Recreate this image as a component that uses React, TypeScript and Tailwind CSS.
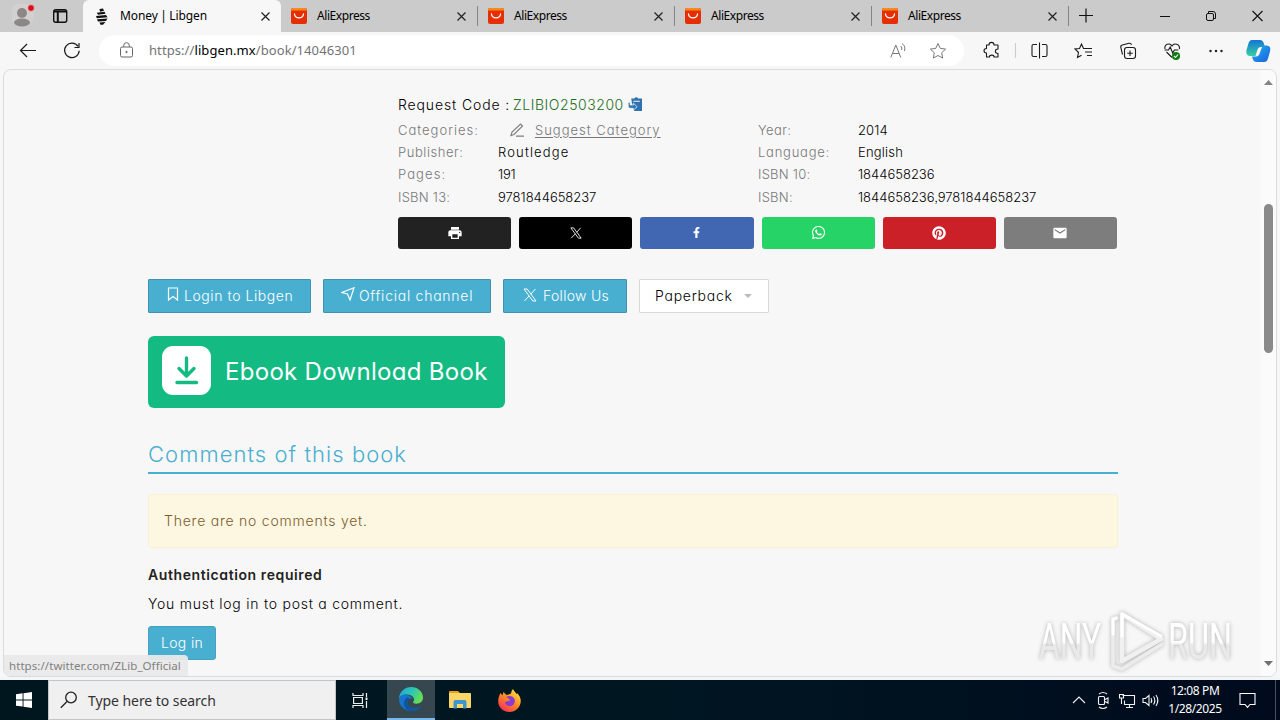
import type { ReactNode } from 'react';
import { FaWhatsapp, FaPinterest, FaFacebookF } from 'react-icons/fa';
import { MdPrint, MdEmail } from 'react-icons/md';

const UI = "font-['Noto_Sans',sans-serif]";

const tabs = ['t1', 't2', 't3', 't4'];

const leftFacts = [
  { label: 'Publisher:', value: 'Routledge', lt: 'tracking-[0.55px]', vt: 'tracking-[1.15px]' },
  { label: 'Pages:', value: '191', lt: 'tracking-[1.1px]', vt: 'tracking-[-0.2px]' },
  { label: 'ISBN 13:', value: '9781844658237', lt: 'tracking-[0.25px]', vt: 'tracking-[-0.02px]' },
];

const rightFacts = [
  { label: 'Year:', value: '2014', lt: 'tracking-[0.4px]', vt: 'tracking-[0.1px]' },
  { label: 'Language:', value: 'English', lt: 'tracking-[0.75px]', vt: 'tracking-[0.2px]' },
  { label: 'ISBN 10:', value: '1844658236', lt: 'tracking-[0.25px]', vt: 'tracking-[0px]' },
  { label: 'ISBN:', value: '1844658236,9781844658237', lt: 'tracking-[0.25px]', vt: 'tracking-[0px]' },
];

function XLogo({ className }: { className?: string }) {
  return (
    <svg viewBox="0 0 14 14" className={className} fill="none" stroke="currentColor">
      <path d="M1 1h3.2L13 13H9.8zM12.4 1 7.8 6.2M6.2 7.9 1.4 13" strokeWidth="1" />
    </svg>
  );
}

function CloseIcon() {
  return (
    <svg width="9" height="9" viewBox="0 0 9 9" fill="none" stroke="#222" strokeWidth="1.2">
      <path d="M.5.5l8 8M8.5.5l-8 8" />
    </svg>
  );
}

function AliIcon() {
  return (
    <svg width="16" height="16" viewBox="0 0 16 16" className="shrink-0">
      <rect width="16" height="16" rx="2" fill="#e62e04" />
      <path d="M0 2.500V2a2 2 0 0 1 2-2h12a2 2 0 0 1 2 2v.5z" fill="#f58b1c" />
      <path d="M3.5 6c.6 5.2 8.4 5.2 9 0" fill="none" stroke="#fff" strokeWidth="1.3" strokeLinecap="round" />
    </svg>
  );
}

function TabStrip() {
  return (
    <div className="flex h-8 bg-[#cbcbcb]">
      <div className="flex w-[83px] shrink-0 items-center pl-3">
        <svg width="58" height="24" viewBox="0 0 58 24" fill="none">
          <circle cx="10" cy="11" r="12" fill="#d3d1d0" />
          <circle cx="10" cy="9" r="5" fill="#8c8886" />
          <ellipse cx="10" cy="18.5" rx="8" ry="4" fill="#8c8886" />
          <circle cx="19" cy="4" r="3.4" fill="#e00b1c" stroke="#e8d5d5" strokeWidth=".8" />
          <rect x="41.7" y="5.7" width="13" height="12.6" rx="2" stroke="#111" strokeWidth="1.4" />
          <path d="M42 7.5h12.5M45.8 8v10" stroke="#111" strokeWidth="2" />
        </svg>
      </div>
      <div className="flex w-[198px] shrink-0 items-center rounded-t-md bg-[#f7f7f7] pl-[13px] pr-[11px]">
        <svg width="12" height="17" viewBox="0 0 12 17" fill="#111">
          <path d="M3.500 1 7 .5l1 2.300-4 1zM.8 4.800 8.500 3.800 9.500 5.800 2 6.800zM0 8 10 7l1.500 2.300L.8 10.300zM1 11.300 11.500 10.500 10 13l-8 .6zM3.500 14.400l6-.4L7 16.800H4.500z" />
        </svg>
        <span className="ml-[12px] flex-1 text-[12px] tracking-[-0.4px] text-black [word-spacing:-0.5px]">
          <span className="tracking-[-0.1px]">Money | Libgen</span>
        </span>
        <CloseIcon />
      </div>
      {tabs.map((id) => (
        <div key={id} className="flex w-[197px] shrink-0 items-center">
          <div className="flex flex-1 items-center pl-[10px] pr-[11px]">
            <AliIcon />
            <span className="ml-[10px] flex-1 text-[12px] tracking-[-0.43px] text-black">AliExpress</span>
            <CloseIcon />
          </div>
          <div className="h-5 w-px bg-[#858585]" />
        </div>
      ))}
      <svg width="211" height="32" viewBox="0 0 211 32" fill="none" stroke="#111" className="-ml-px shrink-0">
        <path d="M11 15.5h14M18 8.5v14" strokeWidth="1.2" />
        <path d="M92 16.5h10" />
        <rect x="138.5" y="13.5" width="7" height="7" rx="1.5" />
        <path d="M140.5 13v-1.500h4.500a2.500 2.500 0 0 1 2.500 2.500V18.500h-1.500" />
        <path d="M184.500 11l10 10M194.500 11l-10 10" strokeWidth="1.100" />
      </svg>
    </div>
  );
}

function Toolbar() {
  return (
    <div className="flex h-[37px] items-center bg-[#f7f7f7]">
      <svg width="99" height="37" viewBox="0 0 99 37" fill="none" stroke="#1b1b1b" strokeWidth="1.2" className="shrink-0">
        <path d="M36 18.500H20.500M27 12l-6.500 6.500L27 25" />
        <path d="M78 14.300a7.300 7.300 0 1 0 1.200 4.500M79 11v4.500h-4.500" />
      </svg>
      <div className="flex h-[31px] w-[865px] shrink-0 items-center rounded-full bg-white pl-[21px] pr-[16px]">
        <svg width="13" height="16" viewBox="0 0 13 16" fill="none" stroke="#666" className="-mt-px">
          <rect x=".5" y="5" width="12" height="10" rx="1.5" />
          <path d="M3.700 5V3.500a2.800 2.800 0 0 1 5.600 0V5" />
          <circle cx="6.500" cy="10" r=".7" fill="#666" />
        </svg>
        <span className="ml-[16px] flex-1 text-[13px] tracking-[0.08px] text-[#737373]">
          https://<span className="text-black">libgen.mx</span>/book/14046301
        </span>
        <svg width="58" height="18" viewBox="0 0 58 18" fill="none" stroke="#777">
          <path d="M.8 15.500 5.800 3l5 12.500M2.500 11.500h6.600M10.500 4c1.500 1 1.500 3 1 4M12 1.500c3 2 3.300 5 2.300 7.500" />
          <path d="M48 1.500l2.300 4.900 5.300.7-3.900 3.700 1 5.300-4.700-2.600-4.700 2.600 1-5.300-3.900-3.700 5.300-.7z" strokeLinejoin="round" />
        </svg>
      </div>
      <svg width="316" height="37" viewBox="964 0 316 37" fill="none" stroke="#1b1b1b" strokeWidth="1.1" className="shrink-0">
        <path d="M986.500 13h2.500c0-3.500 5-3.500 5 0h4v4c-3.500 0-3.500 4.500 0 4.500V25h-4c0-2.500-4.500-2.500-4.500 0h-3v-4c-3.300 0-3.300-4.500 0-4.500z" strokeLinejoin="round" />
        <path d="M1015.500 11v15" stroke="#ccc" />
        <path d="M1037 12.500h-3.500q-1.500 0-1.500 1.500v9q0 1.500 1.500 1.500h3.500M1042 12.500h3.500q1.500 0 1.500 1.500v9q0 1.500-1.500 1.500h-3.500M1039.500 10.500v16" />
        <path d="M1085 16.500h-1.500L1081.500 12l-2 4.500-4.500.5 3.500 3.500-1 5 4-2.300M1085 16.500h7M1085 20h7M1087 23.500h5" />
        <rect x="1124.500" y="15.500" width="11" height="11" rx="2.500" />
        <path d="M1130 18.500v5.500M1127.300 21.200h5.500M1122.500 22.500l-1.700-7q-.4-2 1.500-2.500l6.700-1.700q2-.4 2.500 1.500" />
        <path d="M1172 25.500l-5.500-5.500M1165 17c-1-5 5-6.500 7-3 2-3.500 8-2 7.500 3M1164.500 18h4l1.700-3 2.500 6 1.700-3h4" />
        <circle cx="1176" cy="24" r="4" fill="#107c10" stroke="none" />
        <path d="M1174 24l1.500 1.500 2.500-3" stroke="#fff" />
        <g fill="#1b1b1b" stroke="none">
          <circle cx="1210.500" cy="19" r="1.200" />
          <circle cx="1216" cy="19" r="1.200" />
          <circle cx="1221.500" cy="19" r="1.200" />
        </g>
        <defs>
          <linearGradient id="cpA" x1="0" y1="0" x2="0" y2="1">
            <stop offset="0" stopColor="#1474d8" />
            <stop offset="1" stopColor="#35d0a0" />
          </linearGradient>
          <linearGradient id="cpB" x1="0" y1="0" x2="1" y2="1">
            <stop offset="0" stopColor="#22b4ee" />
            <stop offset="1" stopColor="#1a5fe0" />
          </linearGradient>
        </defs>
        <g stroke="none">
          <path d="M1252 8h8q3 0 4 4l1 3h-4q-3 0-4 4l-1.500 5h-5q-5 0-4-6l1.800-6q1-4 3.700-4z" fill="url(#cpA)" />
          <path d="M1264.500 13.500h2q5 0 3.500 6l-2 7q-1 3.500-4 3.500h-7.500q-3.500 0-4.500-5.500h4q3 0 4-4l1.500-4q.8-3 3-3z" fill="url(#cpB)" />
        </g>
      </svg>
    </div>
  );
}

function ShareButton({ color, children }: { color: string; children: ReactNode }) {
  return <div className={`flex h-8 flex-1 items-center justify-center rounded-[3px] text-white ${color}`}>{children}</div>;
}

function Fact({ label, value, lt, vt }: { label: string; value: string; lt: string; vt: string }) {
  return (
    <div className="flex h-[22.4px] items-center">
      <span className={`w-[100px] text-[#777] ${lt}`}>{label}</span>
      <span className={`text-black ${vt}`}>{value}</span>
    </div>
  );
}

function BookDetails() {
  return (
    <div className="ml-[250px] pt-[23px]">
      <div className="mb-[4px] flex h-[22px] items-center text-[14px] text-black">
        <span className="tracking-[0.87px]">Request Code :</span>
        <span className="ml-[3px] tracking-[0.55px] text-[#1c6e1c]">ZLIBIO2503200</span>
        <svg width="14" height="14" viewBox="0 0 13 13" className="ml-[4px]">
          <path d="M3 1.500h3a1.700 1.700 0 0 1 3.300 0H13V13H6L4.500 11z" fill="#2f72b0" />
          <path d="M5 3.500h6v1H5z" fill="#f7f7f7" />
          <path d="M0 5.500 2 4.500v3h3V5.800L8.500 9 5 12.200v-1.700H1.500Q0 10 0 5.500z" fill="#2f72b0" stroke="#f7f7f7" strokeWidth=".7" />
        </svg>
      </div>
      <div className="grid grid-cols-2 text-[13px] leading-none">
        <div>
          <div className="flex h-[22.4px] items-center text-[#777]">
            <span className="w-[112px] tracking-[1px]">Categories:</span>
            <svg width="14" height="14" viewBox="0 0 14 14" fill="none" stroke="#808080" strokeWidth="1.200">
              <path d="M1 12.500l1-3.500 8.500-8 2 2L4 11.500zM6 13.200h8" />
            </svg>
            <span className="ml-[11px] tracking-[1px] underline underline-offset-2">Suggest Category</span>
          </div>
          {leftFacts.map((f) => (
            <Fact key={f.label} {...f} />
          ))}
        </div>
        <div>
          {rightFacts.map((f) => (
            <Fact key={f.label} {...f} />
          ))}
        </div>
      </div>
      <div className="mt-[8px] flex gap-2 pr-px">
        <ShareButton color="bg-[#222]"><MdPrint size={16} /></ShareButton>
        <ShareButton color="bg-black"><XLogo className="h-3 w-3" /></ShareButton>
        <ShareButton color="bg-[#4267b2]"><FaFacebookF size={11} /></ShareButton>
        <ShareButton color="bg-[#25d366]"><FaWhatsapp size={15} /></ShareButton>
        <ShareButton color="bg-[#cb2027]"><FaPinterest size={14} /></ShareButton>
        <ShareButton color="bg-[#7d7d7d]"><MdEmail size={16} /></ShareButton>
      </div>
    </div>
  );
}

function Actions() {
  const blue = 'flex h-[34px] items-center rounded-[1px] border border-[#3f92b0] bg-[#49afd0] pb-px text-white';
  return (
    <div className="mt-[30px] flex gap-3 text-[14px]">
      <div className={`${blue} w-[163px] pl-[18px]`}>
        <svg width="12" height="14" viewBox="0 0 12 14" fill="none" stroke="currentColor" strokeWidth="1.200" className="-mt-[3px]">
          <path d="M1.500 1h9v12L6 9.500 1.500 13z" />
        </svg>
        <span className="ml-[5px] tracking-[0.57px]">Login to Libgen</span>
      </div>
      <div className={`${blue} w-[168px] pl-[17px]`}>
        <svg width="14" height="14" viewBox="0 0 14 14" fill="none" stroke="currentColor" strokeWidth="1.200" className="-mt-[3px]">
          <path d="M.8 5.500 13 .8 9 13 6.500 7z" />
        </svg>
        <span className="ml-[4px] tracking-[0.75px]">Official channel</span>
      </div>
      <div className={`${blue} w-[124px] pl-[19px]`}>
        <XLogo className="h-[14px] w-[14px]" />
        <span className="ml-[6px] tracking-[0.3px]">Follow Us</span>
      </div>
      <div className="flex h-[34px] w-[130px] items-center rounded-[1px] border border-[#d8d8d8] bg-white pb-px pl-[15px] text-black">
        <span className="tracking-[0.75px]">Paperback</span>
        <svg width="8" height="4" viewBox="0 0 8 4" className="ml-[11px] mt-px">
          <path d="M0 0h8L4 4z" fill="#bbb" />
        </svg>
      </div>
    </div>
  );
}

function Page() {
  return (
    <div className="ml-[144px] w-[970px] flex-none font-light">
      <BookDetails />
      <Actions />
      <div className="mt-[23px] flex h-[72px] w-[357px] items-center rounded-md bg-[#13ba82] pl-[14px]">
        <svg width="49" height="49" viewBox="0 0 49 49" className="-mt-[3px]">
          <rect width="49" height="49" rx="11" fill="#fff" />
          <path d="M24.500 12v17M17 22.500l7.500 7.500 7.500-7.500M15 36.500h19.500" fill="none" stroke="#13ba82" strokeWidth="3.400" strokeLinecap="round" strokeLinejoin="round" />
        </svg>
        <span className="ml-[14px] text-[24px] font-normal tracking-[0.3px] text-white">Ebook Download Book</span>
      </div>
      <div className="mt-[32px] h-[34px] border-b-2 border-[#49afd0] text-[22px] leading-[29px] tracking-[1.05px] text-[#49afd0]">
        Comments of this book
      </div>
      <div className="mt-[20px] flex h-[54px] items-center rounded-[3px] border border-[#faf0d3] bg-[#fdf7e2] pb-px pl-[15px] text-[14px] tracking-[0.77px] text-[#7a5c2a]">
        There are no comments yet.
      </div>
      <div className="mt-[17px] text-[14px] font-semibold leading-5 tracking-[0.6px] text-[#222]">Authentication required</div>
      <div className="mt-[9px] text-[14px] leading-5 tracking-[0.75px] text-black">You must log in to post a comment.</div>
      <div className="mt-[12px] flex h-[34px] w-[68px] items-center justify-center rounded-[3px] border border-[#45a3c2] bg-[#49afd0] pb-px text-[14px] tracking-[0.35px] text-white">
        Log in
      </div>
    </div>
  );
}

function Watermark() {
  return (
    <svg width="220" height="68" viewBox="0 0 220 68" className="absolute left-[1033px] top-[608px] drop-shadow-[0_0_2px_rgba(0,0,0,0.28)]">
      <defs>
        <linearGradient id="wm" x1="0" y1="0" x2="0" y2="1">
          <stop offset=".5" stopColor="#fff" />
          <stop offset=".55" stopColor="#e9e9e9" />
        </linearGradient>
      </defs>
      <g className="font-['Roboto',sans-serif]" fill="url(#wm)" fontSize="50">
        <text x="6" y="51" textLength="62" lengthAdjust="spacingAndGlyphs">ANY</text>
        <text x="135" y="51" textLength="64" lengthAdjust="spacingAndGlyphs">RUN</text>
      </g>
      <g fill="none" strokeLinejoin="round" strokeLinecap="round">
        <path d="M84 10l-4 2v46l9 3 40-25" stroke="#ececec" strokeWidth="3.500" />
        <path d="M89 6v47l39-22z" stroke="#f0f0f0" strokeWidth="4.500" />
        <path d="M89 28V6l39 22M80 26V11l3-1" stroke="#fff" strokeWidth="3" />
      </g>
    </svg>
  );
}

function Viewport() {
  return (
    <div className="relative ml-[3px] flex h-[608px] w-[1274px] overflow-hidden rounded-lg border border-[#dcdcdc] bg-[#f7f7f7] font-['Inter',sans-serif] [font-feature-settings:'cv11','ss03']">
      <Page />
      <div className="ml-auto flex w-[15px] flex-col items-center bg-[#fbfbfb]">
        <svg width="9" height="5" viewBox="0 0 9 5" className="mt-[10px]"><path d="M0 5h9L4.500 0z" fill="#858585" /></svg>
        <div className="mt-[119px] h-[149px] w-[9px] rounded-full bg-[#8a8a8a]" />
        <svg width="9" height="5" viewBox="0 0 9 5" className="mt-[308px]"><path d="M0 0h9L4.500 5z" fill="#707070" /></svg>
      </div>
      <div className={`absolute bottom-0 left-0 flex h-[21px] w-[184px] items-center rounded-tr bg-[#e9e9e9]/95 pl-[5px] text-[11.5px] tracking-[0.07px] text-[#808080] ${UI}`}>
        https://twitter.com/ZLib_Official
      </div>
    </div>
  );
}

function Taskbar() {
  return (
    <div className="flex h-10 bg-linear-to-r from-[#00161f] via-[#001722] to-[#000a1c]">
      <div className="flex w-12 items-center justify-center">
        <svg width="16" height="16" viewBox="0 0 16 16" fill="#fff">
          <path d="M0 2.300 6.600 1.300v6.200H0zM7.500 1.200 16 0v7.500H7.500zM0 8.400h6.600v6.200L0 13.700zM7.500 8.400H16V16l-8.500-1.200z" />
        </svg>
      </div>
      <div className="flex w-[288px] items-center border border-[#c4c4c4] bg-[#f0f0f0] pl-[11px]">
        <svg width="18" height="18" viewBox="0 0 18 18" fill="none" stroke="#222" strokeWidth="1.300">
          <circle cx="11" cy="6.500" r="5.300" />
          <path d="M7 10.500.8 16.800" />
        </svg>
        <span className="ml-[10px] text-[14px] tracking-[-0.06px] text-[#333]">Type here to search</span>
      </div>
      <div className="flex w-[49px] items-center justify-center">
        <svg width="17" height="17" viewBox="0 0 17 17" fill="none" stroke="#eee" strokeWidth="1.200">
          <path d="M1 1v2.500h10V1M1 16v-2.500h10V16M1.600 5.500h8.800v6H1.600zM14.500 1v4M14.500 9v7" />
          <rect x="13.500" y="5.500" width="2" height="2.500" fill="#eee" stroke="none" />
        </svg>
      </div>
      <div className="ml-[2px] flex w-12 items-center justify-center border-b-2 border-[#76b9ed] bg-[#36474f]">
        <svg width="24" height="24" viewBox="0 0 24 24">
          <defs>
            <linearGradient id="edA" x1="0" y1="0" x2="1" y2=".4">
              <stop offset="0" stopColor="#1fa5e0" />
              <stop offset=".6" stopColor="#30c8b0" />
              <stop offset="1" stopColor="#66dd55" />
            </linearGradient>
          </defs>
          <path d="M0 11.500C.5 4.500 6 0 12 0c7 0 12 5 12 10.500 0 4-3 6.200-6.500 6.200-2.500 0-4-1-3.300-2 1-1.200 1-2.200.6-3.400C13.500 7 4 5.500 0 11.500z" fill="url(#edA)" />
          <path d="M0 12c.5-5.500 10-6.500 14 .2-2-1.500-5-.7-5.700 2.300-.8 4 3.500 6.800 7.700 6.500 3 0 5-1 6.500-2C20 23 15.500 24.500 11 24 4 23 0 18 0 12z" fill="#1674cc" />
          <path d="M8.300 10.500C3 13 4 22 11 24c5 .5 9.500-1.500 11.500-5-6 4.500-14.500 2-14.200-4 0-1.500.8-3 2-3.500z" fill="#0d559e" />
        </svg>
      </div>
      <div className="flex w-[50px] items-center justify-center">
        <svg width="22" height="20" viewBox="0 0 22 20">
          <path d="M0 2q0-1 1-1h8l2 2h-9v3H0z" fill="#e8a020" />
          <rect y="3" width="22" height="15" rx=".8" fill="#fbd667" />
          <path d="M4.500 18.500V12q0-2 2-2h9q2 0 2 2v6.500H14V14H8v4.500z" fill="#3d96d3" />
        </svg>
      </div>
      <div className="flex w-12 items-center justify-center">
        <svg width="23" height="23" viewBox="0 0 23 23">
          <defs>
            <linearGradient id="ff" x1=".9" y1="0" x2=".2" y2="1">
              <stop offset="0" stopColor="#fff04a" />
              <stop offset=".5" stopColor="#ff8a22" />
              <stop offset="1" stopColor="#f52a5c" />
            </linearGradient>
          </defs>
          <path d="M2.500 4l2 2.200 1-3.200 3 3Q12 5 13 4.500 13 2 15 0c1 2.500 2.500 3 3.500 5l.8-.8C22 7 23 10 22.700 13c-.7 5.500-5 10-11.200 10S.3 18.500.2 12.500C.2 9 1 6.500 2.500 4z" fill="url(#ff)" />
          <path d="M8 8q5-2.500 8 1c2 3 .5 8-4.500 8-3 0-4.500-2-4.500-4l5-1.500-1-1.800z" fill="#8b3bd0" />
        </svg>
      </div>
      <div className="ml-auto flex items-center text-white">
        <svg width="90" height="20" viewBox="1072 0 90 20" fill="none" stroke="#f2f2f2" strokeWidth="1.100">
          <path d="M1073 13l6-6 6 6" />
          <rect x="1098.500" y="6.500" width="6" height="8" rx="1" />
          <path d="M1105 9.500l3-1.500v5l-3-1.500M1099 4q4-3 8 0M1099 17q4 3 8 0" />
          <path d="M1122.500 5.500h12v9h-10v-4M1129.500 14.500v3M1126 17.500h7M1119.500 4.500h4v3.500h-4zM1121.500 8v6" />
          <path d="M1143 8.500h2.500l3.500-3v10l-3.500-3H1143zM1151 8q1.500 2.500 0 5M1153.500 6.500q2.700 4 0 8M1156 5q3.600 5.500 0 11" />
        </svg>
        <div className="w-[66px] text-center text-[12px] leading-[18px] tracking-[-0.4px]">
          <div>12:08 PM</div>
          <div>1/28/2025</div>
        </div>
        <svg width="17" height="17" viewBox="0 0 17 17" fill="none" stroke="#fff" strokeWidth="1.100" className="ml-[11px]">
          <path d="M1 1.500h15v11h-5l-2.500 2.800L6 12.500H1z" />
        </svg>
        <div className="ml-[19px] mr-[4px] h-10 w-px bg-[#46505b]" />
      </div>
    </div>
  );
}

export default function App() {
  return (
    <div className={`relative flex h-[720px] w-[1280px] flex-col overflow-hidden bg-[#f7f7f7] ${UI}`}>
      <TabStrip />
      <Toolbar />
      <Viewport />
      <div className="h-[3px] bg-[#f3f6f8]" />
      <Taskbar />
      <Watermark />
    </div>
  );
}
